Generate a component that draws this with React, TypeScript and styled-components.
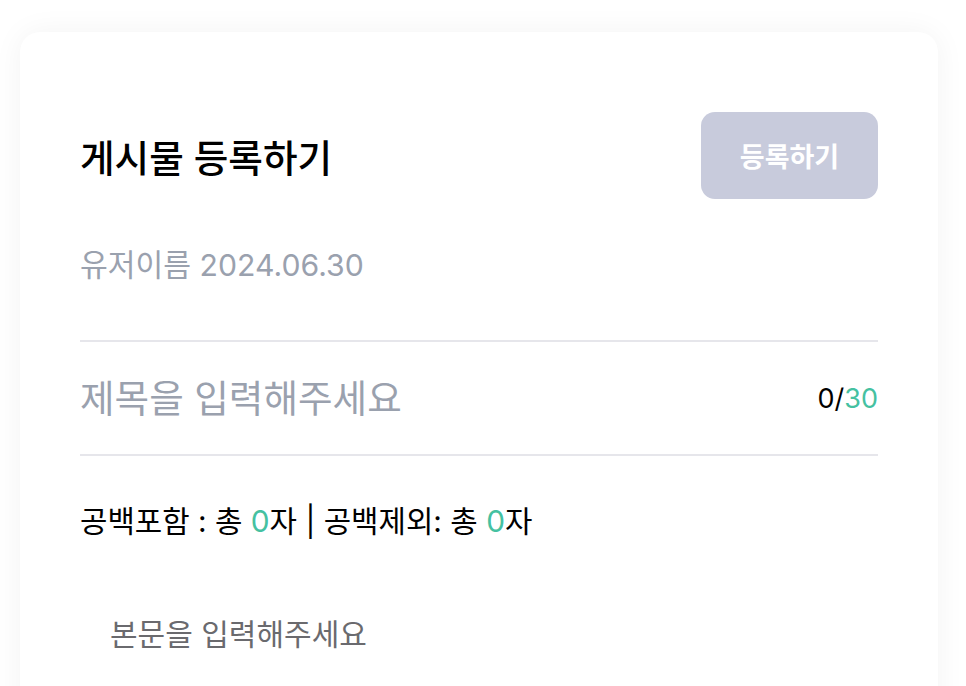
import React, { useState } from "react";
import styled, { createGlobalStyle } from "styled-components";

const GlobalStyle = createGlobalStyle`
  body {
    margin: 0;
    background: #ffffff;
    font-family: "Inter", "Noto Sans CJK KR", "Noto Sans", sans-serif;
  }
  * {
    box-sizing: border-box;
  }
`;

const Page = styled.div`
  padding: 32px 28px 0 20px;
  height: 686px;
  overflow: hidden;
`;

const Card = styled.div`
  background: #ffffff;
  border-radius: 20px;
  box-shadow: 0 0 30px rgba(0, 0, 0, 0.05);
  padding: 80px 60px 40px;
  min-height: 700px;
`;

const Header = styled.div`
  display: flex;
  align-items: center;
  justify-content: space-between;
`;

const Title = styled.h1`
  margin: 0;
  font-size: 37.6px;
  font-weight: 500;
  color: #000000;
`;

const SubmitButton = styled.button`
  width: 177px;
  height: 87px;
  border: none;
  border-radius: 14px;
  background: #c8cbdc;
  color: #ffffff;
  font-family: inherit;
  font-size: 27px;
  font-weight: 600;
`;

const Meta = styled.div`
  margin-top: 46px;
  font-size: 30.2px;
  color: #9aa1ae;
  line-height: 40px;
`;

const TitleRow = styled.div`
  margin-top: 55px;
  display: flex;
  align-items: center;
  border-top: 2px solid #e6e6eb;
  border-bottom: 2px solid #e6e6eb;
  height: 116px;
`;

const TitleInput = styled.input`
  flex: 1;
  border: none;
  outline: none;
  padding: 0;
  font-family: inherit;
  font-size: 37.6px;
  color: #000000;
  background: transparent;
  &::placeholder {
    color: #9aa1ae;
  }
`;

const Counter = styled.span`
  font-size: 27px;
  color: #000000;
`;

const Accent = styled.span`
  color: #45c1a1;
`;

const CountLine = styled.div`
  margin-top: 45px;
  font-size: 29.8px;
  color: #000000;
  line-height: 40px;
`;

const Body = styled.textarea`
  display: block;
  width: 100%;
  margin-top: 73px;
  border: none;
  outline: none;
  resize: none;
  padding: 0 30px;
  font-family: inherit;
  font-size: 30px;
  line-height: 40px;
  height: 300px;
  &::placeholder {
    color: #6a6a6e;
  }
`;

export default function App() {
  const [title, setTitle] = useState("");
  const [body, setBody] = useState("");
  const withSpace = body.length;
  const noSpace = body.replace(/\s/g, "").length;

  return (
    <>
      <GlobalStyle />
      <Page>
        <Card>
          <Header>
            <Title>게시물 등록하기</Title>
            <SubmitButton disabled={!title || !body}>등록하기</SubmitButton>
          </Header>
          <Meta>유저이름 2024.06.30</Meta>
          <TitleRow>
            <TitleInput
              placeholder="제목을 입력해주세요"
              maxLength={30}
              value={title}
              onChange={(e) => setTitle(e.target.value)}
            />
            <Counter>
              {title.length}/<Accent>30</Accent>
            </Counter>
          </TitleRow>
          <CountLine>
            공백포함 : 총 <Accent>{withSpace}</Accent>자 | 공백제외: 총{" "}
            <Accent>{noSpace}</Accent>자
          </CountLine>
          <Body
            placeholder="본문을 입력해주세요"
            value={body}
            onChange={(e) => setBody(e.target.value)}
          />
        </Card>
      </Page>
    </>
  );
}
